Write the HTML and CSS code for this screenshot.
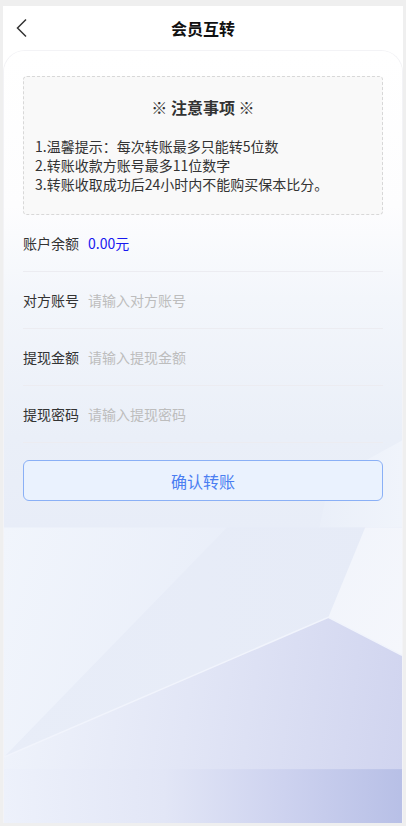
FILE: index.html
```html
<!DOCTYPE html>
<html lang="zh-CN">
<head>
<meta charset="utf-8">
<title>会员互转</title>
<link rel="stylesheet" href="styles.css">
</head>
<body>
<div class="frame">
  <header class="topbar">
    <span class="back">
      <svg width="14" height="20" viewBox="0 0 14 20"><path d="M11 1.5 L2.5 10 L11 18.5" fill="none" stroke="#333" stroke-width="1.5"/></svg>
    </span>
    <h1 class="title">会员互转</h1>
  </header>
  <main class="card">
    <svg class="bg" viewBox="3 50 400 773" preserveAspectRatio="none">
      <defs>
        <linearGradient id="gBase" x1="0" y1="50" x2="0" y2="823" gradientUnits="userSpaceOnUse">
          <stop offset="0" stop-color="#ffffff"/>
          <stop offset="0.2" stop-color="#fdfdfe"/>
          <stop offset="0.32" stop-color="#f3f6fb"/>
          <stop offset="0.5" stop-color="#eaeff8"/>
          <stop offset="0.62" stop-color="#e8edf8"/>
        </linearGradient>
        <linearGradient id="gLeft" x1="0" y1="0" x2="1" y2="0.3">
          <stop offset="0" stop-color="#f1f5fc"/>
          <stop offset="1" stop-color="#e9eef9"/>
        </linearGradient>
        <linearGradient id="gMid" x1="0" y1="0" x2="1" y2="0">
          <stop offset="0" stop-color="#e8edf8"/>
          <stop offset="1" stop-color="#e6ebf7"/>
        </linearGradient>
        <linearGradient id="gBright" x1="0" y1="0" x2="1" y2="1">
          <stop offset="0" stop-color="#f1f4fb"/>
          <stop offset="1" stop-color="#f5f7fc"/>
        </linearGradient>
        <linearGradient id="gLav" x1="3" y1="700" x2="406" y2="760" gradientUnits="userSpaceOnUse">
          <stop offset="0" stop-color="#eff3fb"/>
          <stop offset="0.45" stop-color="#e2e6f6"/>
          <stop offset="1" stop-color="#d0d4ef"/>
        </linearGradient>
        <linearGradient id="gBottom" x1="3" y1="800" x2="406" y2="790" gradientUnits="userSpaceOnUse">
          <stop offset="0" stop-color="#edf1fb"/>
          <stop offset="0.4" stop-color="#e2e6f6"/>
          <stop offset="0.7" stop-color="#cdd2ef"/>
          <stop offset="1" stop-color="#b7bfe6"/>
        </linearGradient>
        <linearGradient id="gTopRight" x1="0" y1="0" x2="1" y2="0">
          <stop offset="0" stop-color="#eaeff9"/>
          <stop offset="1" stop-color="#f0f4fb"/>
        </linearGradient>
      </defs>
      <rect x="3" y="50" width="400" height="773" fill="url(#gBase)"/>
      <polygon points="330,480 403,440 403,527 320,527" fill="url(#gTopRight)"/>
      <polygon points="3,527 403,527 403,823 3,823" fill="url(#gMid)"/>
      <polygon points="3,527 227,527 3,757" fill="url(#gLeft)"/>
      <polygon points="366,527 403,527 403,655 329,617" fill="url(#gBright)"/>
      <polygon points="329,617 403,655 403,769 3,769 3,757" fill="url(#gLav)"/>
      <polyline points="3,757 329,617 403,655" fill="none" stroke="#f1f4fc" stroke-width="1.5"/>
      <rect x="3" y="769" width="400" height="54" fill="url(#gBottom)"/>
    </svg>
    <div class="content">
      <section class="notice">
        <h2 class="notice-title">※ 注意事项 ※</h2>
        <p class="notice-line">1.温馨提示：每次转账最多只能转5位数</p>
        <p class="notice-line">2.转账收款方账号最多11位数字</p>
        <p class="notice-line">3.转账收取成功后24小时内不能购买保本比分。</p>
      </section>
      <div class="row">
        <span class="label">账户余额</span>
        <span class="value balance">0.00元</span>
      </div>
      <div class="row">
        <span class="label">对方账号</span>
        <span class="value placeholder">请输入对方账号</span>
      </div>
      <div class="row">
        <span class="label">提现金额</span>
        <span class="value placeholder">请输入提现金额</span>
      </div>
      <div class="row">
        <span class="label">提现密码</span>
        <span class="value placeholder">请输入提现密码</span>
      </div>
      <button class="submit">确认转账</button>
    </div>
  </main>
</div>
</body>
</html>
```

FILE: styles.css
```css
* { box-sizing: border-box; }
html, body { margin: 0; padding: 0; }
body {
  background: #efefef;
  font-family: "Noto Sans CJK SC", "Noto Sans", sans-serif;
  color: #333;
}
.frame {
  margin: 6px 3px 0 3px;
  height: 817px;
  background: #fff;
  display: flex;
  flex-direction: column;
  overflow: hidden;
}
.topbar {
  height: 44px;
  flex: none;
  display: flex;
  align-items: center;
  justify-content: center;
  position: relative;
}
.back {
  position: absolute;
  left: 12px;
  top: 12px;
  width: 14px;
  height: 20px;
  display: block;
}
.back svg { display: block; }
.title {
  margin: 0;
  font-size: 16px;
  font-weight: bold;
  color: #111;
  line-height: 22px;
}
.card {
  flex: 1;
  position: relative;
  border-radius: 22px 22px 0 0;
  border: 1px solid #f3f3f6;
  border-bottom: none;
  overflow: hidden;
}
.bg {
  position: absolute;
  left: 0;
  top: 0;
  width: 100%;
  height: 100%;
  display: block;
}
.content {
  position: relative;
  padding: 25px 19px 0 19px;
}
.notice {
  border: 1px dashed #d8d8d8;
  border-radius: 4px;
  background: #f9f9f9;
  height: 139px;
  padding: 19px 11px 0 11px;
}
.notice-title {
  margin: 0 0 19px 0;
  text-align: center;
  font-size: 16px;
  line-height: 22px;
  font-weight: bold;
  color: #333;
}
.notice-line {
  margin: 0;
  font-size: 14px;
  line-height: 19px;
  color: #333;
  white-space: nowrap;
}
.row {
  height: 57px;
  border-bottom: 1px solid #ececf1;
  display: flex;
  align-items: center;
  font-size: 14px;
  padding-bottom: 1px;
}
.label {
  width: 56px;
  color: #333;
  margin-right: 9px;
}
.balance { color: #1717f0; }
.placeholder { color: #bdbdbd; }
.submit {
  display: block;
  width: 100%;
  height: 41px;
  margin-top: 17px;
  border: 1px solid #8ab0f6;
  border-radius: 6px;
  background: #eaf2fe;
  color: #4a7ef2;
  font-family: "Noto Sans CJK SC", "Noto Sans", sans-serif;
  font-size: 16px;
  padding: 0;
}
```
